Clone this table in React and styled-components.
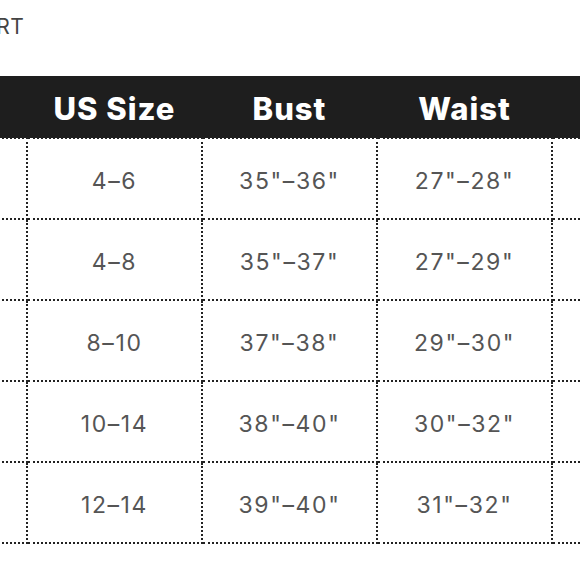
import React from "react";
import styled, { createGlobalStyle } from "styled-components";

const GlobalStyle = createGlobalStyle`
  html, body {
    margin: 0;
    padding: 0;
    background: #fff;
    overflow: hidden;
  }
  body {
    font-family: Inter, "Noto Sans", sans-serif;
  }
`;

const rows = [
  ["4–6", "35\"–36\"", "27\"–28\""],
  ["4–8", "35\"–37\"", "27\"–29\""],
  ["8–10", "37\"–38\"", "29\"–30\""],
  ["10–14", "38\"–40\"", "30\"–32\""],
  ["12–14", "39\"–40\"", "31\"–32\""],
];

const Page = styled.div`
  width: 580px;
  height: 580px;
  overflow: hidden;
`;

const Title = styled.h2`
  margin: 0 0 0 -104px;
  height: 76px;
  padding-top: 14px;
  box-sizing: border-box;
  font-size: 21px;
  font-weight: 400;
  color: #444;
  letter-spacing: 0.5px;
  white-space: nowrap;
`;

const Table = styled.table`
  border-collapse: collapse;
  margin-left: -149px;
  table-layout: fixed;
  width: 875px;
`;

const HeadCell = styled.th`
  width: 175px;
  height: 58px;
  padding: 3px 0 0;
  background: #1e1e1e;
  color: #fff;
  font-size: 31px;
  font-weight: 800;
  letter-spacing: 1px;
  text-align: center;
  vertical-align: middle;
`;

const Cell = styled.td`
  box-sizing: border-box;
  height: 81px;
  padding: 4px 0 0;
  border: 2px dotted #222;
  color: #555;
  font-size: 23px;
  font-weight: 400;
  letter-spacing: 1.6px;
  text-align: center;
  vertical-align: middle;
`;

export default function App() {
  return (
    <Page>
      <GlobalStyle />
      <Title>SIZE CHART</Title>
      <Table>
        <thead>
          <tr>
            <HeadCell />
            <HeadCell>US Size</HeadCell>
            <HeadCell>Bust</HeadCell>
            <HeadCell>Waist</HeadCell>
            <HeadCell />
          </tr>
        </thead>
        <tbody>
          {rows.map((r, i) => (
            <tr key={i}>
              <Cell />
              {r.map((v, j) => (
                <Cell key={j}>{v}</Cell>
              ))}
              <Cell />
            </tr>
          ))}
        </tbody>
      </Table>
    </Page>
  );
}
